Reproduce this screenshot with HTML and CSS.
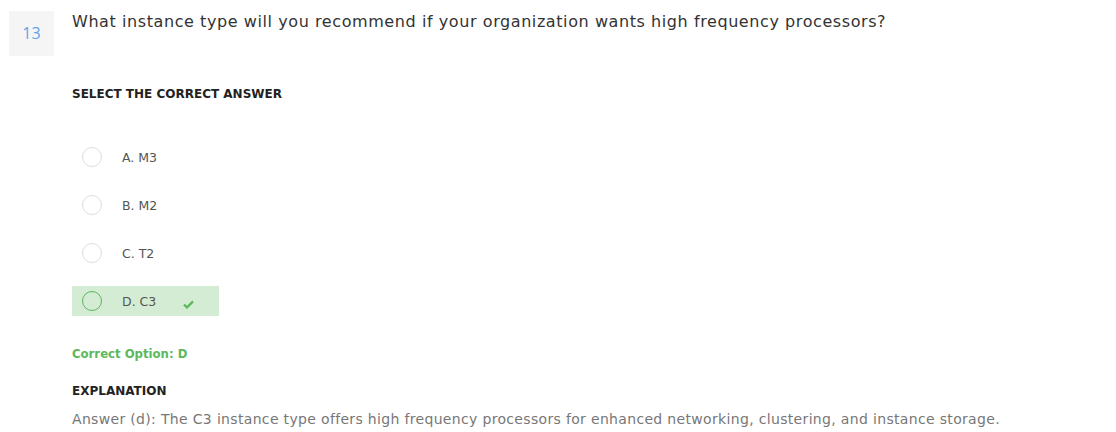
FILE: index.html
```html
<!DOCTYPE html>
<html>
<head>
<meta charset="utf-8">
<link rel="stylesheet" href="styles.css">
</head>
<body>
<div class="question">
  <div class="num">13</div>
  <div class="content">
    <div class="title">What instance type will you recommend if your organization wants high frequency processors?</div>
    <div class="label">SELECT THE CORRECT ANSWER</div>
    <div class="options">
      <div class="option"><span class="radio"></span><span class="otext">A. M3</span></div>
      <div class="option"><span class="radio"></span><span class="otext">B. M2</span></div>
      <div class="option"><span class="radio"></span><span class="otext">C. T2</span></div>
      <div class="option correct"><span class="radio"></span><span class="otext">D. C3</span>
        <svg class="check" width="11" height="9" viewBox="0 0 11 9"><path d="M1 4.6 L4 7.4 L10 1.4" fill="none" stroke="#5cb85c" stroke-width="2.2"/></svg>
      </div>
    </div>
    <div class="answer">Correct Option: D</div>
    <div class="label expl-label">EXPLANATION</div>
    <div class="expl">Answer (d): The C3 instance type offers high frequency processors for enhanced networking, clustering, and instance storage.</div>
  </div>
</div>
</body>
</html>
```
FILE: styles.css
```css
body {
  margin: 0;
  font-family: "DejaVu Sans", "Open Sans", sans-serif;
  background: #fff;
}
.question {
  display: flex;
  padding: 11px 0 0 9px;
}
.num {
  width: 45px;
  height: 45px;
  flex: none;
  background: #f5f5f5;
  color: #5da3ec;
  font-size: 16px;
  font-family: "Open Sans", sans-serif;
  display: flex;
  align-items: center;
  justify-content: center;
  padding-bottom: 2px;
  box-sizing: border-box;
}
.content {
  margin-left: 18px;
  display: flex;
  flex-direction: column;
  align-items: flex-start;
}
.title {
  font-size: 16px;
  letter-spacing: 0.58px;
  line-height: 22px;
  color: #333;
}
.label {
  font-size: 12px;
  font-weight: 700;
  color: #222;
  line-height: 16px;
  margin-top: 53px;
}
.options {
  display: flex;
  flex-direction: column;
  gap: 18px;
  margin-top: 40px;
}
.option {
  display: inline-flex;
  align-items: center;
  height: 30px;
  padding-left: 10px;
  width: 137px;
}
.radio {
  width: 18px;
  height: 18px;
  border: 1px solid #ddd;
  border-radius: 50%;
  flex: none;
}
.otext {
  margin-left: 20px;
  font-size: 12.5px;
  color: #555;
}
.correct {
  background: #d5ecd4;
}
.correct .radio {
  border-color: #5cb85c;
}
.check {
  margin-left: 27px;
  margin-top: 6px;
}
.answer {
  margin-top: 30px;
  font-size: 11.7px;
  font-weight: 700;
  color: #5cb85c;
  line-height: 16px;
}
.expl-label {
  margin-top: 21px;
}
.expl {
  margin-top: 10px;
  font-size: 14px;
  letter-spacing: 0.33px;
  line-height: 20px;
  color: #777;
}
```
